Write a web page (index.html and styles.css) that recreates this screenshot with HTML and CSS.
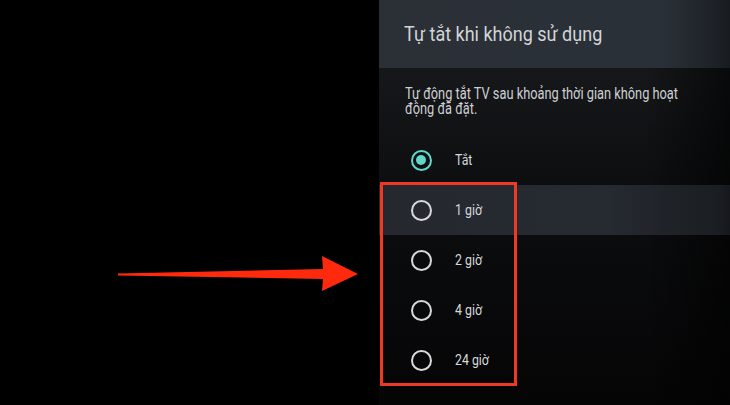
FILE: index.html
```html
<!DOCTYPE html>
<html lang="vi">
<head>
<meta charset="utf-8">
<link rel="stylesheet" href="styles.css">
</head>
<body>
<div class="screen">
  <div class="left">
    <svg class="arrow" width="250" height="40" viewBox="0 0 250 40">
      <path d="M0 17.5 L205 13 L204 0 L240 18 L204 35 L205 23 L0 19.5 Z" fill="#ff2a0d"/>
    </svg>
  </div>
  <div class="panel">
    <div class="header">
      <h1 class="title">Tự tắt khi không sử dụng</h1>
    </div>
    <div class="body">
      <p class="desc">Tự động tắt TV sau khoảng thời gian không hoạt động đã đặt.</p>
      <ul class="options">
        <li class="option"><span class="radio checked"></span><span class="label">Tắt</span></li>
        <li class="option focused"><span class="radio"></span><span class="label">1 giờ</span></li>
        <li class="option"><span class="radio"></span><span class="label">2 giờ</span></li>
        <li class="option"><span class="radio"></span><span class="label">4 giờ</span></li>
        <li class="option"><span class="radio"></span><span class="label">24 giờ</span></li>
      </ul>
    </div>
    <div class="highlight-box"></div>
  </div>
</div>
</body>
</html>
```

FILE: styles.css
```css
* { box-sizing: border-box; }
html, body { margin: 0; padding: 0; background: #000; }
body { width: 730px; height: 405px; overflow: hidden; font-family: Roboto, "Noto Sans", sans-serif; }
.screen { display: flex; width: 730px; height: 405px; }
.left { width: 379px; flex: none; position: relative; }
.arrow { position: absolute; left: 118px; top: 256px; }
.panel { flex: 1; position: relative; display: flex; flex-direction: column;
  background: linear-gradient(180deg, #1b1d20 0%, #0d0e10 45%, #050506 100%); }
.header { height: 68px; flex: none; padding: 0 0 0 25px;
  background: linear-gradient(90deg, #2b3037 0%, #2a3037 75%, #1c2026 90%, #0c0d10 100%);
  display: flex; align-items: center; }
.title { margin: 0; font-weight: 400; font-size: 20px; line-height: 24px; color: #d2d5d8;
  transform: scaleX(0.9); transform-origin: left center; white-space: nowrap; }
.body { flex: 1; background: linear-gradient(90deg, rgba(0,0,0,0) 70%, rgba(0,0,0,0.8) 100%); }
.desc { margin: 18px 0 0 26px; width: 352px; font-size: 16px; line-height: 15px; color: #cdd0d3;
  transform: scaleX(0.8); transform-origin: left top; }
.options { list-style: none; margin: 19px 0 0 0; padding: 0; }
.option { height: 50px; display: flex; align-items: center; padding-left: 32px; }
.option.focused { background: linear-gradient(90deg, #25292f 0%, #262b31 60%, #1a1d22 90%, #0a0b0d 100%); }
.radio { width: 21px; height: 21px; border-radius: 50%; border: 2px solid #d8d9db; flex: none; position: relative; }
.radio.checked { border: 2.5px solid #62d6ca; }
.radio.checked::after { content: ""; position: absolute; left: 3px; top: 3px; width: 10px; height: 10px; border-radius: 50%; background: #62d6ca; }
.label { margin-left: 23px; font-size: 14px; color: #d6d8db; white-space: nowrap;
  transform: scaleX(0.88); transform-origin: left center; }
.highlight-box { position: absolute; left: 1px; top: 182px; width: 137px; height: 204px; border: 3px solid #ee3a24; }
```
